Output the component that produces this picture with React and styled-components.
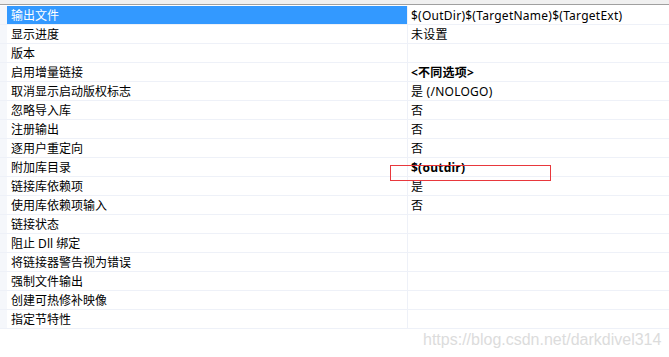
import React from 'react'
import styled, { createGlobalStyle } from 'styled-components'

const Global = createGlobalStyle`
body {
  margin: 0;
  background: #ffffff;
  font-family: "Noto Sans", "Noto Sans CJK SC", sans-serif;
}
`

const Page = styled.div`
position: relative;
width: 669px;
height: 357px;
overflow: hidden;
background: #ffffff;
`

const TopBand = styled.div`
height: 4px;
background: #f0f0f0;
border-bottom: 1px solid #a0a0a0;
`

const Grid = styled.div`
display: flex;
flex-direction: column;
padding-top: 1px;
`

const Row = styled.div`
display: flex;
height: 18px;
border-bottom: 1px solid #eef1f8;
`

const Gutter = styled.div`
width: 7px;
flex: none;
background: #f5f7fb;
`

const Label = styled.div`
width: 401px;
flex: none;
display: flex;
align-items: center;
padding-left: 4px;
box-sizing: border-box;
font-size: 12px;
color: ${p => (p.$active ? '#ffffff' : '#000000')};
background: ${p => (p.$active ? '#3399ff' : '#ffffff')};
border-right: 1px solid #eef1f8;
white-space: nowrap;
`

const Value = styled.div`
flex: 1;
display: flex;
align-items: center;
padding-left: 3px;
font-size: 12px;
letter-spacing: 0.25px;
color: #000000;
font-weight: ${p => (p.$bold ? 700 : 400)};
white-space: nowrap;
`

const Mark = styled.div`
position: absolute;
left: 390px;
top: 165px;
width: 161px;
height: 16px;
box-sizing: border-box;
border: 1px solid #e8383d;
`

const Watermark = styled.div`
position: absolute;
left: 423px;
top: 331px;
font-family: "Liberation Sans", Arial, sans-serif;
font-size: 16px;
color: #dcdcdc;
`

const rows = [
  ['输出文件', '$(OutDir)$(TargetName)$(TargetExt)'],
  ['显示进度', '未设置'],
  ['版本', ''],
  ['启用增量链接', '<不同选项>', true],
  ['取消显示启动版权标志', '是 (/NOLOGO)'],
  ['忽略导入库', '否'],
  ['注册输出', '否'],
  ['逐用户重定向', '否'],
  ['附加库目录', '$(outdir)', true],
  ['链接库依赖项', '是'],
  ['使用库依赖项输入', '否'],
  ['链接状态', ''],
  ['阻止 Dll 绑定', ''],
  ['将链接器警告视为错误', ''],
  ['强制文件输出', ''],
  ['创建可热修补映像', ''],
  ['指定节特性', ''],
]

function App() {
  return (
    <Page>
      <Global />
      <TopBand />
      <Grid>
        {rows.map(([name, val, bold], i) => (
          <Row key={name}>
            <Gutter />
            <Label $active={i === 0}>{name}</Label>
            <Value $bold={bold}>{val}</Value>
          </Row>
        ))}
      </Grid>
      <Mark />
      <Watermark>https://blog.csdn.net/darkdivel314</Watermark>
    </Page>
  )
}

export default App
